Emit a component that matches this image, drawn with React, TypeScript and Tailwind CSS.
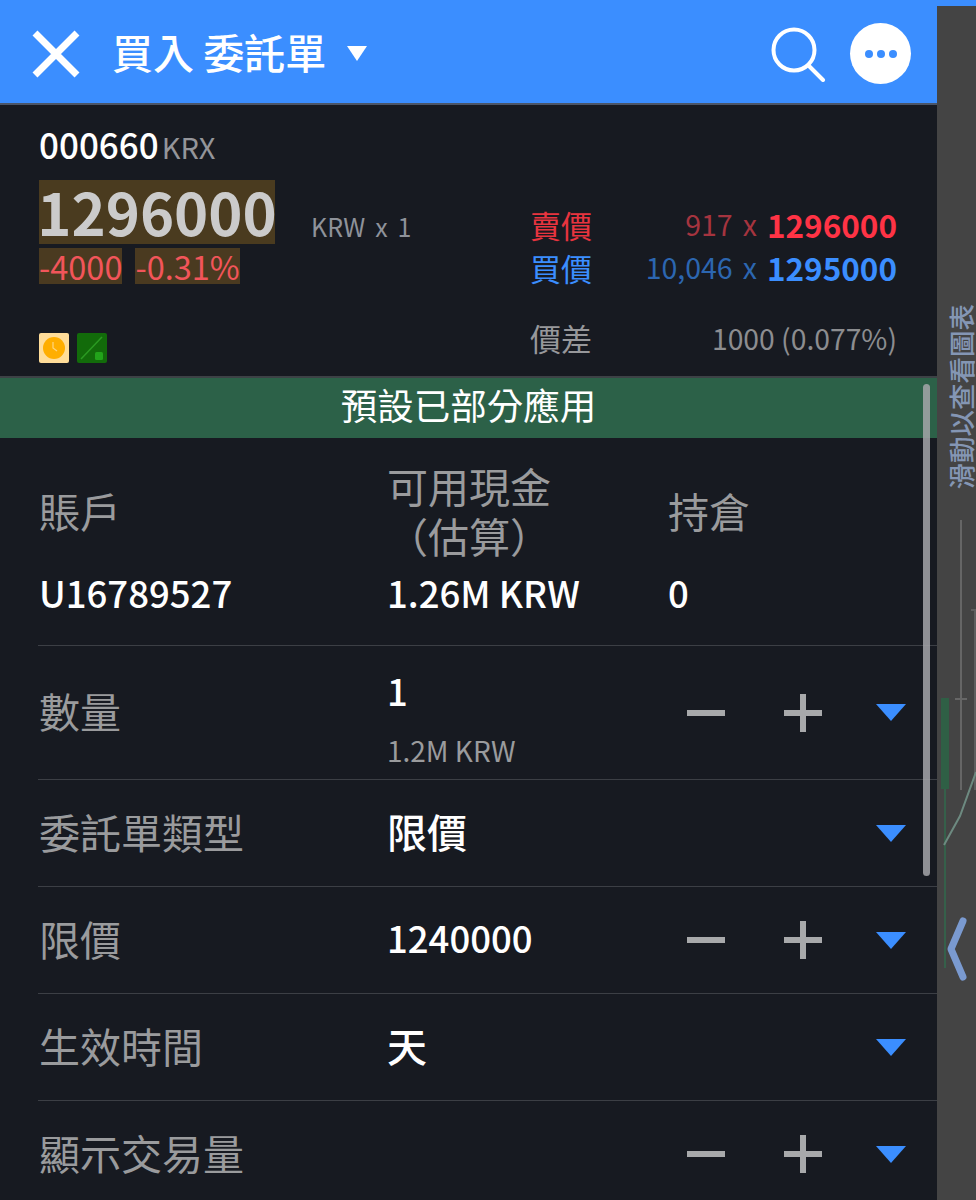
function Triangle() {
  return (
    <svg width="30" height="17" viewBox="0 0 30 17" className="block">
      <path d="M0 0H30L15 17Z" fill="#3b8eff" />
    </svg>
  );
}

function Stepper() {
  return (
    <div className="flex items-center">
      <div className="h-[6px] w-[38px] bg-[#a8a9ab]" />
      <div className="relative ml-[59px] h-[38px] w-[38px]">
        <div className="absolute left-0 top-[16px] h-[6px] w-[38px] bg-[#a8a9ab]" />
        <div className="absolute left-[16px] top-0 h-[38px] w-[6px] bg-[#a8a9ab]" />
      </div>
    </div>
  );
}

function OrderRow({
  label,
  value,
  sub,
  stepper,
  big,
  height,
}: {
  label: string;
  value?: string;
  sub?: string;
  stepper?: boolean;
  big?: boolean;
  height: string;
}) {
  return (
    <div className={`ml-[38px] flex items-center border-t border-[#3c3f45] ${height}`}>
      <div className="mb-[4px] w-[349px] pl-[1px] text-[41px] leading-none text-[#9a9b9d]">{label}</div>
      <div className={sub ? "mb-[4px] mt-[16px] flex-1" : "mb-[4px] flex-1"}>
        {value && (
          <div className={big ? "text-[40px] font-medium leading-none text-white" : "text-[36.5px] font-medium leading-none text-white"}>
            {value}
          </div>
        )}
        {sub && <div className="mt-[27px] text-[28px] leading-none text-[#9a9b9d]">{sub}</div>}
      </div>
      {stepper && <Stepper />}
      <div className="ml-[54px] mr-[31px]">
        <Triangle />
      </div>
    </div>
  );
}

export default function App() {
  return (
    <div
      lang="zh-Hant"
      className="relative flex h-[1200px] w-[976px] overflow-hidden bg-[#3b8eff] font-['Noto_Sans_CJK_TC','Noto_Sans',sans-serif]"
    >
      <main className="w-[937px] shrink-0 bg-[#171a21]">
        <header className="flex h-[105px] items-center border-b-2 border-[#4b5567] bg-[#3b8eff] pt-[4px]">
          <svg width="48" height="48" viewBox="0 0 48 48" className="ml-[32px]">
            <path d="M3 3L45 45M45 3L3 45" stroke="white" strokeWidth="7" />
          </svg>
          <div className="mb-[4px] ml-[32px] text-[41px] font-medium leading-none text-white">買入 委託單</div>
          <svg width="20" height="15" viewBox="0 0 20 15" className="ml-[21px]">
            <path d="M0 0H20L10 15Z" fill="white" />
          </svg>
          {/* search glass, handle runs past the box of the circle */}
          <svg width="56" height="56" viewBox="0 0 56 56" className="ml-auto">
            <circle cx="24" cy="24" r="20.5" stroke="white" strokeWidth="4" fill="none" />
            <path d="M39 40L53 54" stroke="white" strokeWidth="4" strokeLinecap="round" />
          </svg>
          <div className="ml-[24px] mr-[26px] flex h-[61px] w-[61px] items-center justify-center gap-[4px] rounded-full bg-white">
            <span className="h-[8px] w-[8px] rounded-full bg-[#3b8eff]" />
            <span className="h-[8px] w-[8px] rounded-full bg-[#3b8eff]" />
            <span className="h-[8px] w-[8px] rounded-full bg-[#3b8eff]" />
          </div>
        </header>

        <section className="h-[271px] pl-[39px] pr-[40px] pt-[17px]">
          <div className="flex items-baseline">
            <span className="text-[35px] font-medium leading-[44px] text-white">000660</span>
            <span className="ml-[3px] text-[29px] leading-[44px] text-[#94959a]">KRX</span>
          </div>
          <div className="mt-[12px] flex">
            <div className="w-[272px]">
              <div className="flex h-[64px] w-[236px] items-center justify-center bg-[#4a3b1f] pb-[2px] text-[58px] font-bold leading-none text-[#cbcbcb]">
                1296000
              </div>
              <div className="mt-[4px] flex gap-[13px] text-[32.5px] leading-[36px] text-[#f2555a]">
                <span className="bg-[#4a3a20]">-4000</span>
                <span className="bg-[#4a3a20]">-0.31%</span>
              </div>
            </div>
            <div className="mt-[26px] flex gap-[10px] text-[25px] leading-[40px] text-[#8e929a]">
              <span>KRW</span>
              <span>x</span>
              <span>1</span>
            </div>
            <div className="ml-auto mt-[23px] w-[367px]">
              <div className="flex h-[43px] items-center justify-between">
                <span className="text-[31px] leading-none text-[#e8343f]">賣價</span>
                <span className="flex items-center text-[28.5px] leading-none text-[#a5343f]">
                  <span>917</span>
                  <span className="ml-[10px]">x</span>
                  <span className="ml-[10px] text-[31.5px] font-bold text-[#ff3345]">1296000</span>
                </span>
              </div>
              <div className="flex h-[43px] items-center justify-between">
                <span className="text-[31px] leading-none text-[#3b8eff]">買價</span>
                <span className="flex items-center text-[28.5px] leading-none text-[#2c66b0]">
                  <span>10,046</span>
                  <span className="ml-[10px]">x</span>
                  <span className="ml-[10px] text-[31.5px] font-bold text-[#3b8eff]">1295000</span>
                </span>
              </div>
            </div>
          </div>
          <div className="mt-[27px] flex items-start">
            <div className="mt-[17px] flex gap-[8px]">
              <div className="flex h-[30px] w-[30px] items-center justify-center rounded-[2px] bg-[#ffdd99]">
                <svg width="22" height="22" viewBox="0 0 22 22">
                  <circle cx="11" cy="11" r="11" fill="#ffae00" />
                  <path d="M10 5V11L14 14" stroke="#ffd680" strokeWidth="1.2" fill="none" />
                </svg>
              </div>
              <svg width="30" height="30" viewBox="0 0 30 30">
                <rect width="30" height="30" rx="2" fill="#126b0a" />
                <path d="M4 26L25 4" stroke="#2b9a22" strokeWidth="1.5" />
                <rect x="18" y="19" width="8" height="8" rx="1.5" fill="#22a31a" />
              </svg>
            </div>
            <div className="ml-auto flex w-[367px] items-center justify-between">
              <span className="text-[31px] leading-[44px] text-[#97989b]">價差</span>
              <span className="text-[28.3px] leading-[44px] text-[#8c8d90]">1000 (0.077%)</span>
            </div>
          </div>
        </section>

        <div className="flex h-[62px] items-center justify-center border-t-2 border-[#3d4246] bg-[#2c6148] pb-[6px] text-[36.5px] leading-none text-white">
          預設已部分應用
        </div>

        <section className="flex h-[207px] pl-[39px] pt-[22px]">
          <div className="w-[348px]">
            <div className="flex h-[100px] items-center text-[41px] leading-none text-[#9a9b9d]">賬戶</div>
            <div className="mt-[13px] text-[36.5px] font-medium leading-[40px] text-white">U16789527</div>
          </div>
          <div className="w-[281px]">
            <div className="flex h-[100px] flex-col justify-center text-[41px] leading-[50px] text-[#9a9b9d]">
              <span>可用現金</span>
              <span>（估算）</span>
            </div>
            <div className="mt-[13px] text-[36.5px] font-medium leading-[40px] text-white">1.26M KRW</div>
          </div>
          <div>
            <div className="flex h-[100px] items-center text-[41px] leading-none text-[#9a9b9d]">持倉</div>
            <div className="mt-[13px] text-[36.5px] font-medium leading-[40px] text-white">0</div>
          </div>
        </section>

        <OrderRow label="數量" value="1" sub="1.2M KRW" stepper height="h-[134px]" />
        <OrderRow label="委託單類型" value="限價" big height="h-[107px]" />
        <OrderRow label="限價" value="1240000" stepper height="h-[107px]" />
        <OrderRow label="生效時間" value="天" big height="h-[107px]" />
        <OrderRow label="顯示交易量" stepper height="h-[107px]" />
      </main>

      <aside className="relative mt-[6px] flex-1 bg-[#444444]">
        <svg width="39" height="1194" viewBox="937 6 39 1194" className="absolute inset-0">
          <path d="M961 520V790M955 699H967" stroke="#666666" strokeWidth="2" fill="none" />
          <path d="M975 610V790M971 610H976" stroke="#5e5e5e" strokeWidth="2" fill="none" />
          <rect x="941" y="698" width="8" height="91" fill="#2f5f45" />
          <path d="M945 789V968" stroke="#35604a" strokeWidth="2" />
          <path d="M944 845L960 816L976 772" stroke="#6d8a80" strokeWidth="2" fill="none" />
          <path d="M963 921L951 949L963 977" stroke="#7a9ad0" strokeWidth="7" strokeLinecap="round" strokeLinejoin="round" fill="none" />
        </svg>
        <div className="absolute left-[10px] top-[298px] rotate-180 text-[26.5px] font-medium leading-[28px] text-[#8496b4] [text-orientation:sideways] [writing-mode:vertical-rl]">
          滑動以查看圖表
        </div>
      </aside>

      <div className="absolute left-[923px] top-[384px] h-[492px] w-[7px] rounded-full bg-[#a5a6a9]/85" />
    </div>
  );
}
